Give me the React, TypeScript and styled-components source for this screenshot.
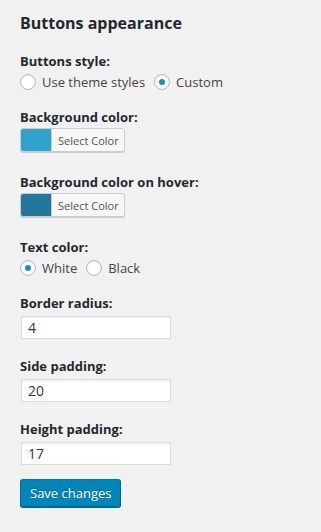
import React, { useState } from 'react';
import styled, { createGlobalStyle } from 'styled-components';

const GlobalStyle = createGlobalStyle`
  html, body {
    margin: 0;
    padding: 0;
    background: #f1f1f1;
  }
  body {
    font-family: "Open Sans", "Noto Sans", sans-serif;
    color: #444;
    font-size: 13px;
  }
`;

const Panel = styled.div`
  padding: 11px 20px 20px 20px;
  width: 281px;
  min-height: 501px;
  background: #f1f1f1;
`;

const Title = styled.h2`
  margin: 0 0 17px 0;
  font-size: 16px;
  line-height: 24px;
  font-weight: 700;
  color: #23282d;
`;

const Field = styled.div<{ $gap?: number }>`
  margin-bottom: ${({ $gap }) => $gap ?? 18}px;
`;

const Label = styled.div<{ $tight?: boolean }>`
  display: block;
  font-size: 13px;
  line-height: 18px;
  font-weight: 700;
  color: #23282d;
  margin-bottom: ${({ $tight }) => ($tight ? 2 : 4)}px;
`;

const RadioRow = styled.div`
  display: flex;
  align-items: center;
  height: 16px;
`;

const RadioOption = styled.label`
  display: flex;
  align-items: center;
  margin-right: 9px;
  cursor: pointer;
  font-size: 13px;
  color: #444;
`;

const RadioCircle = styled.span<{ $checked: boolean }>`
  box-sizing: border-box;
  width: 16px;
  height: 16px;
  border-radius: 50%;
  border: 1px solid #b4b9be;
  background: #fff;
  box-shadow: inset 0 1px 2px rgba(0, 0, 0, 0.1);
  margin-right: 6px;
  display: flex;
  align-items: center;
  justify-content: center;

  &::after {
    content: '';
    display: ${({ $checked }) => ($checked ? 'block' : 'none')};
    width: 6px;
    height: 6px;
    border-radius: 50%;
    background: #1e8cbe;
  }
`;

const ColorButton = styled.button`
  display: inline-flex;
  align-items: stretch;
  box-sizing: border-box;
  height: 24px;
  padding: 0;
  border: 1px solid #ccc;
  border-radius: 3px;
  background: #f7f7f7;
  box-shadow: 0 1px 0 #ccc;
  overflow: hidden;
  cursor: pointer;
  font-family: "Open Sans", "Noto Sans", sans-serif;
`;

const Swatch = styled.span<{ $color: string }>`
  width: 30px;
  background: ${({ $color }) => $color};
  border-right: 1px solid #ccc;
`;

const SwatchText = styled.span`
  display: flex;
  align-items: center;
  padding: 0 5px 0 6px;
  font-size: 11px;
  color: #555;
`;

const TextInput = styled.input`
  box-sizing: border-box;
  width: 150px;
  height: 23px;
  margin-left: 1px;
  padding: 0 6px;
  border: 1px solid #ddd;
  background: #fff;
  box-shadow: inset 0 1px 2px rgba(0, 0, 0, 0.07);
  font-family: "Open Sans", "Noto Sans", sans-serif;
  font-size: 14px;
  color: #32373c;
  outline: none;
`;

const SaveButton = styled.button`
  box-sizing: border-box;
  height: 28px;
  padding: 0 9px;
  border: 1px solid #0073aa;
  border-color: #0073aa #006799 #006799;
  border-radius: 3px;
  background: #0085ba;
  box-shadow: 0 1px 0 #006799;
  color: #fff;
  font-family: "Open Sans", "Noto Sans", sans-serif;
  font-size: 13px;
  text-shadow: 0 -1px 1px #006799;
  cursor: pointer;
`;

type RadioProps = {
  options: string[];
  value: string;
  onChange: (v: string) => void;
};

const RadioGroup: React.FC<RadioProps> = ({ options, value, onChange }) => (
  <RadioRow>
    {options.map((opt) => (
      <RadioOption key={opt} onClick={() => onChange(opt)}>
        <RadioCircle $checked={value === opt} />
        {opt}
      </RadioOption>
    ))}
  </RadioRow>
);

const App: React.FC = () => {
  const [style, setStyle] = useState('Custom');
  const [textColor, setTextColor] = useState('White');
  const [radius, setRadius] = useState('4');
  const [side, setSide] = useState('20');
  const [height, setHeight] = useState('17');

  return (
    <>
      <GlobalStyle />
      <Panel>
        <Title>Buttons appearance</Title>

        <Field>
          <Label>Buttons style:</Label>
          <RadioGroup options={['Use theme styles', 'Custom']} value={style} onChange={setStyle} />
        </Field>

        <Field>
          <Label $tight>Background color:</Label>
          <ColorButton>
            <Swatch $color="#2ea2cc" />
            <SwatchText>Select Color</SwatchText>
          </ColorButton>
        </Field>

        <Field>
          <Label $tight>Background color on hover:</Label>
          <ColorButton>
            <Swatch $color="#22779a" />
            <SwatchText>Select Color</SwatchText>
          </ColorButton>
        </Field>

        <Field>
          <Label>Text color:</Label>
          <RadioGroup options={['White', 'Black']} value={textColor} onChange={setTextColor} />
        </Field>

        <Field>
          <Label>Border radius:</Label>
          <TextInput value={radius} onChange={(e) => setRadius(e.target.value)} />
        </Field>

        <Field>
          <Label>Side padding:</Label>
          <TextInput value={side} onChange={(e) => setSide(e.target.value)} />
        </Field>

        <Field $gap={14}>
          <Label>Height padding:</Label>
          <TextInput value={height} onChange={(e) => setHeight(e.target.value)} />
        </Field>

        <SaveButton>Save changes</SaveButton>
      </Panel>
    </>
  );
};

export default App;
